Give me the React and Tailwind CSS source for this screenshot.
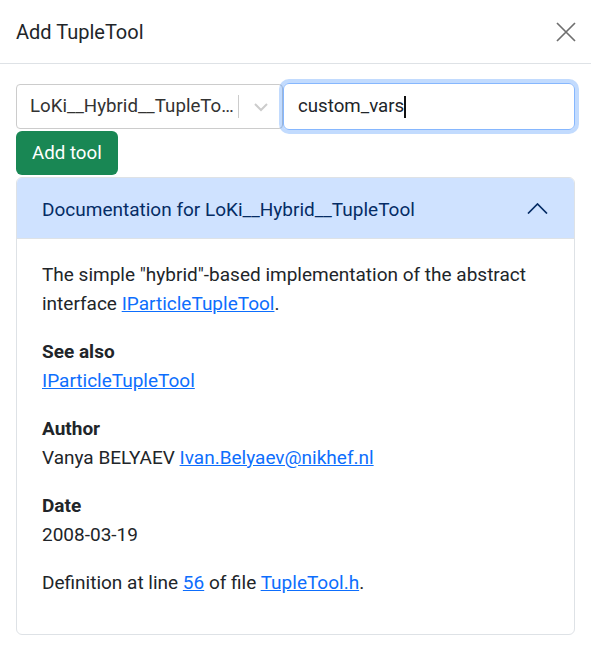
export default function App() {
  const font = { fontFamily: 'Roboto, "Liberation Sans", sans-serif' };
  return (
    <div className="w-[591px] h-[648px] bg-white text-[#212529] text-[19px]" style={font}>
      {/* Modal header */}
      <div className="h-[64px] px-4 flex items-center justify-between border-b border-[#dee2e6]">
        <h5 className="text-[20px] leading-[30px]">Add TupleTool</h5>
        <button className="w-[20px] h-[20px] mr-[-1px] flex items-center justify-center text-[#6f6f6f]" aria-label="Close">
          <svg width="20" height="20" viewBox="0 0 20 20" fill="none" stroke="currentColor" strokeWidth="1.7">
            <path d="M1 1l18 18M19 1L1 19" />
          </svg>
        </button>
      </div>

      {/* Modal body */}
      <div className="px-4 pt-[19px]">
        <div className="flex items-start text-[18.7px]">
          {/* react-select style dropdown */}
          <div className="w-[267px] h-[45px] mt-[1px] flex items-center border border-[#cccccc] rounded-[4px] bg-white">
            <span className="flex-1 pl-[13px] truncate text-[#333]">LoKi__Hybrid__TupleTo…</span>
            <span className="w-px h-[23px] bg-[#cccccc]" />
            <span className="w-[43px] flex items-center justify-center text-[#cccccc]">
              <svg width="16" height="10" viewBox="0 0 16 10" fill="none" stroke="currentColor" strokeWidth="2">
                <path d="M2 2l6 6 6-6" />
              </svg>
            </span>
          </div>
          {/* focused text input */}
          <div className="flex-1 h-[47px] flex items-center border border-[#86b7fe] rounded-[6px] shadow-[0_0_0_4px_rgba(13,110,253,0.25)] pl-[14px]">
            <span>custom_vars</span>
            <span className="w-[2px] h-[22px] bg-[#111]" />
          </div>
        </div>

        <button className="mt-[1px] h-[44px] px-[16px] rounded-[6px] bg-[#198754] text-white text-[18.7px]">
          Add tool
        </button>

        {/* Accordion */}
        <div className="mt-[2px] border border-[#dee2e6] rounded-[6px] overflow-hidden">
          <div className="h-[61px] flex items-center justify-between pl-[25px] pr-[26px] bg-[#cfe2ff] text-[#052c65] border-b border-[#dee2e6]">
            <span className="pt-[4px]">Documentation for LoKi__Hybrid__TupleTool</span>
            <svg width="21" height="11" viewBox="0 0 21 11" fill="none" stroke="currentColor" strokeWidth="1.7">
              <path d="M1 10.5l9.5-9.5 9.5 9.5" />
            </svg>
          </div>
          <div className="pl-[25px] pr-[20px] pt-[21px] pb-[18px] leading-[29px]">
            <p className="mb-[19px]">
              The simple "hybrid"-based implementation of the abstract interface{' '}
              <a href="#" className="text-[#0d6efd] underline">IParticleTupleTool</a>.
            </p>
            <p className="mb-[19px]">
              <b>See also</b>
              <br />
              <a href="#" className="text-[#0d6efd] underline">IParticleTupleTool</a>
            </p>
            <p className="mb-[19px]">
              <b>Author</b>
              <br />
              Vanya BELYAEV <a href="#" className="text-[#0d6efd] underline">Ivan.Belyaev@nikhef.nl</a>
            </p>
            <p className="mb-[19px]">
              <b>Date</b>
              <br />
              2008-03-19
            </p>
            <p className="mb-[19px]">
              Definition at line <a href="#" className="text-[#0d6efd] underline">56</a> of file{' '}
              <a href="#" className="text-[#0d6efd] underline">TupleTool.h</a>.
            </p>
          </div>
        </div>
      </div>
    </div>
  );
}
